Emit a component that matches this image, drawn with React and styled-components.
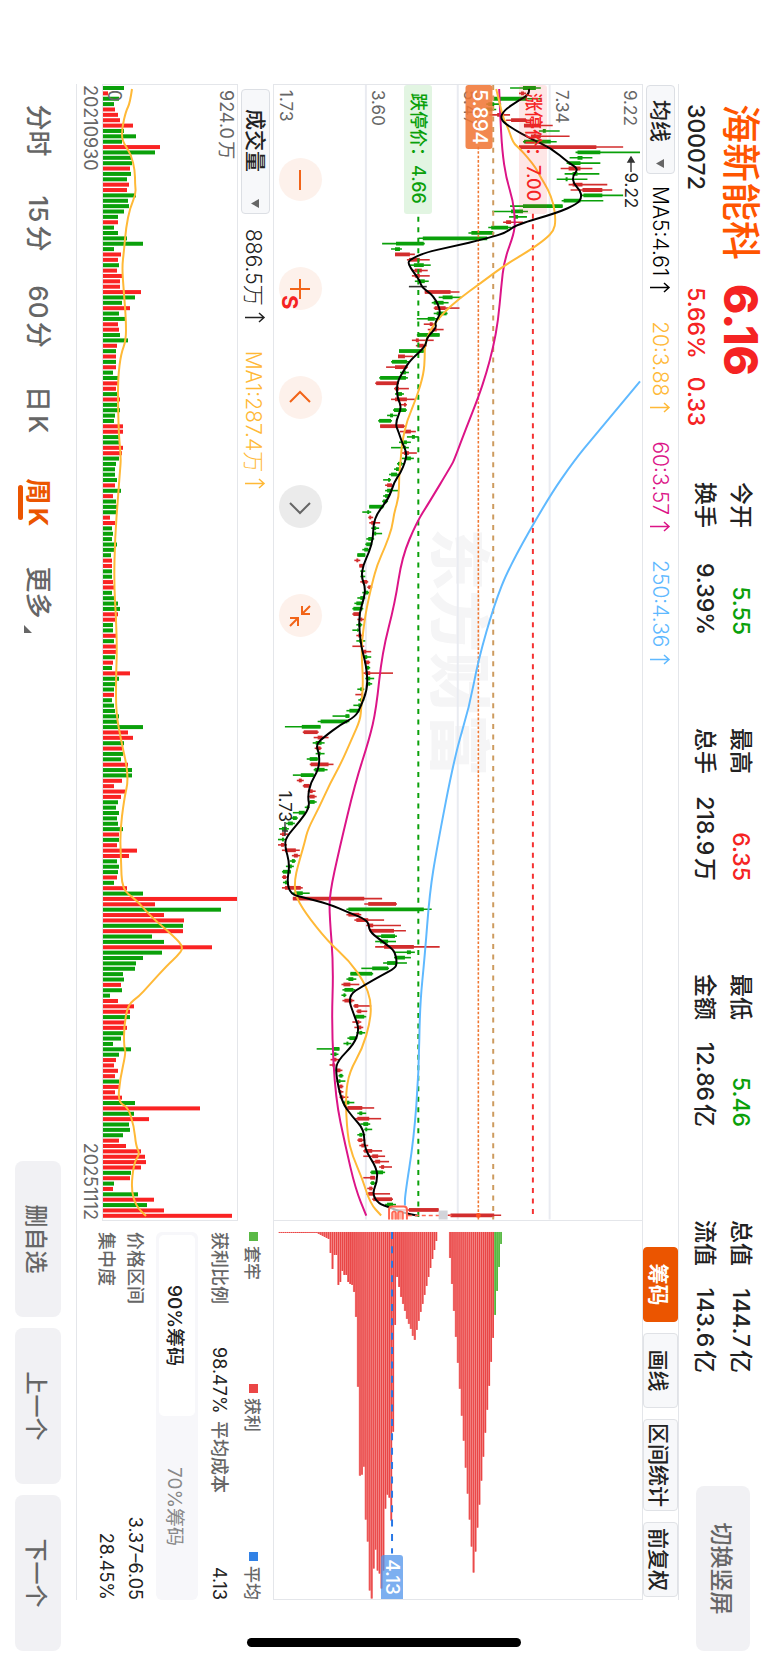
import { useState } from 'react';
import styled, { createGlobalStyle, css } from 'styled-components';

const RED = '#f52323';
const GREEN = '#0aa00a';
const ORANGE = '#eb5500';
const AMBER = '#ffb937';
const MAGENTA = '#dc1487';
const SKY = '#5fb9ff';
const BORDER = '#e4e6ea';

const CHART_W = 1137;
const CHART_H = 371;
const VOL_H = 134;
const STEP = 5.38;
const PRICE_MAX = 9.22;
const PRICE_MIN = 1.73;

// one week per entry: colour, low, body low, body high, high, volume
// (two letters: candle colour, then volume colour)
const weeks = `
g 238 251 264 269 21|r 247 249 252 254 5|g 221 221 255 269 16|g 214 216 222 229 11|gr 212 214 220 224 12
r 217 225 232 238 15|r 234 239 254 262 17|r 252 252 269 281 30|g 267 271 274 288 21|rg 259 259 269 298 33
g 251 252 279 285 19|r 247 247 325 352 57|g 304 306 329 369 52|g 298 306 311 321 29|g 295 297 309 329 29
r 289 297 309 321 27|g 293 301 306 328 28|g 285 294 296 316 24|r 297 301 311 336 26|r 299 311 331 341 24
g 309 312 331 352 33|g 290 292 309 332 25|g 238 251 291 291 26|g 220 239 251 256 21|g 237 242 246 255 15
r 231 234 239 251 15|g 216 219 236 239 11|g 196 199 221 222 15|g 146 150 215 215 24|g 109 123 151 152 40
g 118 122 127 129 11|r 122 122 137 142 18|r 134 136 147 157 15|g 136 141 151 158 16|r 139 142 149 155 14
r 139 142 147 157 20|gr 142 146 152 156 17|kr 136 150 150 154 17|r 152 152 178 187 38|g 166 170 180 189 32
g 159 161 171 176 19|r 161 162 173 187 27|g 161 164 174 175 16|g 144 155 162 167 22|r 151 157 160 162 15
r 155 159 164 171 16|g 144 146 167 167 17|rg 139 143 146 161 25|r 143 146 151 154 14|g 126 126 151 151 13
r 125 125 132 140 13|g 118 119 134 136 13|r 113 122 134 135 13|g 127 130 133 136 10|g 106 107 133 135 15
r 102 103 125 126 15|r 121 122 126 136 13|g 122 124 129 131 14|r 118 122 134 142 17|rg 126 131 133 134 14
g 120 121 133 134 17|g 114 117 120 124 12|g 105 106 118 119 11|r 107 107 131 132 20|r 127 132 138 143 20
g 134 139 142 146 16|g 126 128 134 138 16|gr 118 131 133 136 20|r 128 131 136 144 19|g 129 132 138 141 16
g 124 125 129 131 13|g 121 123 126 127 12|g 116 118 124 127 12|g 110 115 117 118 14|r 112 114 119 121 12
g 112 114 119 126 18|gr 110 112 116 117 10|g 109 110 114 115 13|g 96 96 110 111 14|g 89 94 96 98 13
r 95 96 98 100 7|r 96 98 102 107 12|g 98 100 103 106 9|g 99 101 103 109 10|g 93 95 99 101 9
g 92 93 98 99 14|g 89 91 95 96 12|g 84 84 92 92 8|r 81 83 85 87 9|r 86 86 90 90 9
g 87 89 90 92 9|g 87 89 90 92 9|r 87 89 94 95 10|r 94 95 98 99 12|g 89 91 95 96 9
g 84 87 90 92 11|g 81 83 89 90 15|g 79 80 89 90 17|r 79 80 86 86 15|r 84 87 89 92 14
g 83 85 88 89 10|g 79 84 85 86 10|r 83 85 88 90 14|g 83 86 89 92 11|r 79 88 89 91 13
r 89 90 93 98 14|g 90 91 94 98 12|r 91 92 96 97 10|g 92 93 96 97 9|r 90 92 97 120 27
g 92 94 97 101 16|g 93 95 97 99 14|g 84 87 90 91 11|r 82 88 89 90 11|g 85 87 89 91 9
g 80 85 88 89 11|g 73 76 86 87 12|g 59 72 76 76 16|g 44 47 74 76 15|g 11 28 47 47 40
r 29 30 44 45 25|r 40 44 49 55 30|g 39 42 48 51 21|r 41 43 47 48 19|g 42 45 47 51 20
g 33 36 44 45 18|r 36 37 55 60 25|g 40 41 51 54 29|g 19 27 40 41 29|r 23 25 28 30 19
r 29 30 36 37 11|r 34 36 39 42 22|r 34 36 41 43 18|g 35 36 41 43 15|g 31 33 35 36 13
g 19 25 31 32 16|g 17 19 23 24 14|g 12 14 19 21 15|g 5 8 13 15 20|r 6 8 11 14 16
g 4 8 10 12 16|r 4 7 10 13 14|r 8 11 22 26 34|r 18 20 24 27 26|g 16 18 21 22 14
g 12 14 18 20 16|g 8 9 17 17 15|r 8 9 12 13 14|g 9 11 14 15 11|r 8 11 27 29 24
g 18 21 29 36 40|r 19 19 91 109 134|r 91 95 123 124 52|g 73 75 151 159 118|r 73 75 86 88 61
r 81 83 95 111 81|rg 93 95 100 128 80|r 96 97 121 133 80|g 103 108 122 124 49|g 102 107 115 123 61
r 102 111 141 167 109|g 122 134 138 142 59|g 121 123 132 138 40|g 110 114 123 134 33|g 88 99 115 116 32
g 77 77 99 100 20|g 73 75 80 83 21|r 68 70 77 86 18|g 69 71 80 82 19|g 68 70 72 73 7
r 69 71 79 81 15|r 80 81 85 98 31|r 83 84 88 94 27|g 81 82 91 93 27|r 79 84 86 88 22
r 81 84 88 90 24|g 83 86 89 92 21|g 74 76 83 84 18|g 70 73 75 78 10|g 43 60 66 66 28
g 57 60 63 65 16|r 57 60 63 66 13|r 56 59 61 62 11|r 62 63 67 69 15|gr 65 66 69 70 12
g 63 65 67 72 16|r 65 66 69 70 16|r 65 66 68 70 12|r 66 67 70 75 19|g 69 71 76 81 32
r 73 74 89 101 97|g 84 86 89 93 31|r 82 84 96 108 46|g 87 90 95 97 26|g 91 92 94 99 27
g 84 86 89 92 20|r 84 85 89 92 16|r 86 88 91 95 23|r 90 91 99 109 38|r 90 99 105 112 42
r 99 102 107 116 43|r 106 108 111 119 38|g 97 98 110 112 28|r 90 97 102 102 27|g 97 98 101 102 11
r 94 96 99 100 10|rg 93 95 100 117 35|r 99 100 119 120 51|g 112 114 120 123 44|r 120 136 166 166 61
r 175 178 222 229 129`
  .trim()
  .split(/[\n|]/)
  .map((entry) => {
    const [tone, ...nums] = entry.split(' ');
    const [low, bodyLow, bodyHigh, high, volume] = nums.map(Number);
    return { tone: tone[0], volTone: tone[tone.length - 1], low, bodyLow, bodyHigh, high, volume };
  });

const averages = [
  {
    color: SKY,
    points: '297,2 353,49 376,68 413,94 483,134 521,149 576,165 623,174 673,189 766,207 809,214 873,219 923,224 989,225 1056,230 1113,239 1123,239',
  },
  {
    color: MAGENTA,
    points: '4,144 29,143 66,141 93,137 116,130 136,128 149,129 176,139 203,142 236,145 263,150 289,157 313,165 343,177 375,189 381,192 419,215 438,227 473,242 519,249 569,262 626,268 656,275 699,289 765,305 811,315 833,315 883,311 943,313 1016,309 1063,299 1106,289 1133,278',
  },
  {
    color: AMBER,
    points: '4,147 16,144 33,140 43,135 58,130 63,124 73,115 83,107 93,102 104,95 119,89 136,87 146,89 154,97 165,112 181,139 198,162 214,184 228,200 243,212 259,219 273,219 289,220 313,227 336,237 359,242 373,243 393,245 413,245 429,250 444,252 463,259 481,267 499,272 526,278 546,281 566,283 599,281 623,283 636,284 654,292 681,304 699,314 723,325 746,337 759,340 783,347 796,350 811,350 829,340 858,317 878,295 899,280 918,273 939,274 966,282 989,295 1013,299 1053,297 1073,292 1096,282 1121,274 1133,263',
  },
  {
    color: '#000',
    points: '4,114 9,113 16,125 26,140 35,143 44,130 54,112 63,92 78,74 84,64 91,70 99,69 106,62 113,61 119,65 128,85 140,127 148,137 154,157 162,192 168,219 175,234 179,236 188,230 196,224 203,222 211,210 228,202 238,209 243,207 253,217 262,218 276,234 286,240 298,247 313,247 323,242 339,249 349,245 358,242 369,237 378,239 388,243 398,250 414,255 429,267 441,271 454,271 468,275 481,281 493,283 503,279 514,280 529,285 546,285 563,283 574,280 589,277 606,277 624,284 633,289 641,304 653,320 661,329 671,325 686,326 699,334 713,337 724,335 738,345 754,359 763,360 781,355 799,358 811,354 814,342 821,315 829,297 837,276 848,275 856,265 864,254 869,249 880,247 885,249 892,262 902,280 913,297 933,290 946,285 961,290 978,307 989,309 1019,303 1034,292 1047,280 1066,280 1086,267 1099,267 1111,272 1121,266 1125,254 1130,242 1133,227',
  },
];

const volumeAverage =
  '4,105 18,107 26,111 43,115 56,115 69,106 86,102 99,102 109,101 123,107 143,111 166,113 183,115 209,113 236,111 256,111 269,116 293,119 323,119 353,118 374,116 386,117 413,119 453,122 499,123 533,121 566,120 593,121 629,121 656,116 693,108 716,113 749,117 776,116 806,115 816,101 833,86 853,63 864,53 873,60 881,69 903,89 913,98 921,109 943,113 963,113 969,111 996,117 1019,119 1024,109 1043,103 1063,101 1071,97 1079,103 1106,106 1123,101 1133,91';

// holdings per price level, lowest price first
const chips = [
  ...Array(19).fill(1), 1, 2, 3, 4, 5, 6, 7,
  21, 37, 23, 23, 53, 50, 39, 43, 43, 50, 52, 53, 60, 85, 155, 244, 243, 235, 288, 310, 359, 367,
  337, 318, 339, 342, 357, 339, 277, 263, 266, 289, 200, 93,
  45, 55, 65, 72, 79, 87, 92, 97, 104, 108, 98, 89, 80, 72, 63, 54, 45, 36, 27, 18, 9,
  0, 0, 0, 0, 0, 0,
  26, 52, 79, 105, 131, 157, 184, 209, 236, 262, 288, 315, 341, 320, 296, 273, 249, 225, 201, 178, 154, 130, 106,
  83, 59, 35, 12,
];
const CHIP_STEP = 1.975;
const TRAPPED_FROM = chips.length - 4;

const stats = [
  [{ label: '今开', value: '5.55', color: GREEN }, { label: '换手', value: '9.39%' }],
  [{ label: '最高', value: '6.35', color: RED }, { label: '总手', value: '218.9万' }],
  [{ label: '最低', value: '5.46', color: GREEN }, { label: '金额', value: '12.86亿' }],
  [{ label: '总值', value: '144.7亿' }, { label: '流值', value: '143.6亿' }],
];

const priceLabels = [9.22, 7.34, 5.47, 3.6, 1.73];
const periods = ['分时', '15分', '60分', '日K', '周K'];

const candleColors = { r: '#d22d2d', g: '#0aa00a', k: '#333' };
const volumeColors = { r: '#fa2323', g: '#0aa00a' };

const priceTop = (price) => `${((PRICE_MAX - price) / (PRICE_MAX - PRICE_MIN)) * 100}%`;

const smooth = (text) => {
  const pts = text.split(' ').map((p) => p.split(',').map(Number));
  let d = `M${pts[0]}`;
  for (let i = 1; i < pts.length - 1; i++) {
    const [x, y] = pts[i];
    const [nx, ny] = pts[i + 1];
    d += ` Q${x} ${y} ${(x + nx) / 2} ${(y + ny) / 2}`;
  }
  return `${d} L${pts[pts.length - 1]}`;
};

const GlobalStyle = createGlobalStyle`
  * { box-sizing: border-box; }
  body {
    margin: 0;
    background: #fff;
    color: #222;
    font-family: Inter, 'Noto Sans CJK SC', sans-serif;
  }
  button, select {
    font: inherit;
    color: inherit;
    margin: 0;
    padding: 0;
    border: 0;
    background: none;
    cursor: pointer;
  }
  dl, dd, dt, h1, p { margin: 0; }
`;

const Device = styled.div`
  height: 100vh;
  overflow: hidden;
`;

/* landscape screen turned clockwise */
const Screen = styled.main`
  position: relative;
  display: flex;
  flex-direction: column;
  width: 100vh;
  height: 100vw;
  transform-origin: 0 0;
  transform: translateX(100vw) rotate(90deg);
`;

const Header = styled.header`
  display: flex;
  height: 89px;
  padding: 0 11px 0 104px;
`;

const Quote = styled.div`
  width: 378px;
`;

const QuoteRow = styled.div`
  display: flex;
  align-items: center;
  height: ${(p) => (p.$small ? 36 : 54)}px;
  gap: 18px;
  font-size: ${(p) => (p.$small ? 23 : 24)}px;
  font-weight: 500;
`;

const StockName = styled.h1`
  width: 162px;
  color: #ff5500;
  font-size: 39px;
  font-weight: 500;
  line-height: 54px;
  white-space: nowrap;
`;

const Price = styled.strong`
  color: ${RED};
  font-size: 46px;
  font-weight: 800;
  line-height: 54px;
`;

const Code = styled.span`
  width: 165px;
`;

const Change = styled.span`
  color: ${RED};
`;

const Stats = styled.div`
  display: flex;
  flex: 1;
  gap: 93px;
  padding-top: 9px;
`;

const StatList = styled.dl`
  width: 153px;
`;

const Stat = styled.div`
  display: flex;
  justify-content: space-between;
  font-size: 23px;
  font-weight: 500;
  line-height: 36px;
  text-autospace: normal;

  dd {
    color: ${(p) => p.$color || '#222'};
  }
`;

const SoftButton = styled.button`
  width: ${(p) => p.$width}px;
  height: ${(p) => p.$height}px;
  border-radius: 8px;
  background: #f1f1f4;
  color: #666;
  font-size: 23px;
  font-weight: 500;
`;

const HeaderButton = styled(SoftButton)`
  margin-top: 18px;
`;

const Body = styled.div`
  display: flex;
  flex: 1;
  flex-direction: column;
  min-height: 0;
  margin: 0 62px 0 84px;
  border-top: 1px solid ${BORDER};
  border-bottom: 1px solid ${BORDER};
`;

const Toolbar = styled.div`
  display: flex;
  align-items: center;
  height: 35px;
  padding-left: ${(p) => p.$inset || 0}px;
  padding-right: 3px;
`;

const Picker = styled.label`
  display: flex;
  position: relative;
  align-items: center;
  width: ${(p) => p.$width}px;
  height: 29px;
  border: 1px solid #dcdfe4;
  border-radius: 4px;
  background: #f7f8fa;

  select {
    width: 100%;
    height: 100%;
    padding-left: ${(p) => p.$pad}px;
    appearance: none;
    font-size: 21px;
    font-weight: 500;
  }

  svg {
    position: absolute;
    right: 5px;
    pointer-events: none;
  }
`;

const ReadingText = styled.span`
  display: flex;
  align-items: center;
  gap: 6px;
  margin-left: ${(p) => p.$gap}px;
  color: ${(p) => p.$color || '#222'};
  font-size: 21px;
  font-weight: 300;
`;

const Tools = styled.div`
  display: flex;
  gap: 11px;
  margin-left: auto;
`;

const Tool = styled.button`
  min-width: 75px;
  height: 35px;
  padding: 0 3px;
  border: 1px solid #e0e2e6;
  border-radius: 4px;
  background: #f7f8fa;
  font-size: 21px;
  font-weight: 500;
  ${(p) =>
    p.$active &&
    css`
      border-color: ${ORANGE};
      background: ${ORANGE};
      color: #fff;
      font-weight: 700;
    `}
`;

const ChartFrame = styled.section`
  display: grid;
  flex: 1;
  grid-template-columns: 3fr 1fr;
  min-height: 0;
  border: 1px solid ${BORDER};
`;

const Pane = styled.div`
  position: relative;
  min-width: 0;
  min-height: 0;
  border-right: ${(p) => (p.$divided ? `1px solid ${BORDER}` : 0)};
`;

const Drawing = styled.svg`
  display: block;
  position: absolute;
  inset: 0;
  width: 100%;
  height: 100%;
`;

const Watermark = styled.span`
  position: absolute;
  top: 50%;
  left: 50%;
  transform: translate(-50%, -50%);
  color: #f5f5f6;
  font-size: 62px;
  font-weight: 900;
  line-height: 1;
  white-space: nowrap;
`;

const AxisLabel = styled.span`
  position: absolute;
  left: 5px;
  padding: 2px 0;
  transform: ${(p) => (p.$below ? 'none' : 'translateY(-100%)')};
  color: #666;
  font-size: 17px;
  line-height: 20px;
`;

const LimitTag = styled.span`
  position: absolute;
  left: 0;
  min-width: 129px;
  height: 28px;
  padding: 0 8px;
  transform: translateY(-50%);
  border-radius: 3px;
  background: ${(p) => (p.$up ? 'rgba(250, 50, 50, 0.12)' : 'rgba(20, 170, 20, 0.12)')};
  color: ${(p) => (p.$up ? RED : GREEN)};
  font-size: 18px;
  font-weight: 500;
  line-height: 28px;
  white-space: nowrap;
`;

const CostTag = styled.span`
  position: absolute;
  left: 0;
  height: 27px;
  padding: 0 4px;
  transform: translateY(-50%);
  border-radius: 3px;
  background: rgba(240, 120, 55, 0.88);
  color: #fff;
  font-size: 20px;
  font-weight: 500;
  line-height: 27px;
`;

const Marker = styled.span`
  display: flex;
  position: absolute;
  top: ${(p) => p.$top}%;
  left: ${(p) => p.$left}%;
  align-items: center;
  transform: translateY(-50%);
  color: #222;
  font-size: 17px;
  line-height: 20px;
`;

const Controls = styled.div`
  display: flex;
  position: absolute;
  bottom: 5px;
  left: 73px;
  gap: 66px;
`;

const RoundButton = styled.button`
  display: flex;
  align-items: center;
  justify-content: center;
  width: 43px;
  height: 43px;
  border-radius: 50%;
  background: ${(p) => (p.$muted ? '#ebebeb' : '#fdf1eb')};
  color: ${(p) => (p.$muted ? '#666' : '#f26418')};
`;

const SellMark = styled.b`
  position: absolute;
  bottom: 4px;
  left: 210px;
  color: ${RED};
  font-size: 22px;
  line-height: 24px;
`;

const CostLabel = styled.span`
  position: absolute;
  top: 68%;
  right: 0;
  padding: 0 4px;
  transform: translateY(-50%);
  border-radius: 3px 0 0 3px;
  background: rgba(80, 148, 235, 0.75);
  color: #fff;
  font-size: 19px;
  font-weight: 500;
  line-height: 22px;
`;

const Lower = styled.section`
  display: grid;
  grid-template-columns: 3fr 1fr;
`;

const VolumePane = styled.div`
  position: relative;
  height: 136px;
  border: 1px solid ${BORDER};
`;

const VolumeLabel = styled.span`
  position: absolute;
  left: 5px;
  ${(p) => (p.$bottom ? 'bottom: 0;' : 'top: 0;')}
  color: #666;
  font-size: 18px;
  line-height: 22px;
  text-autospace: normal;
`;

const Dates = styled.div`
  display: flex;
  justify-content: space-between;
  height: 25px;
  padding: 0 1px;
  color: #666;
  font-size: 18px;
  line-height: 24px;
`;

const ChipPanel = styled.aside`
  padding-left: 11px;
  color: #666;
  font-size: 18px;
  font-weight: 500;
`;

const Legend = styled.div`
  display: grid;
  grid-template-columns: 152px 1fr auto;
  height: 38px;
  align-items: center;
`;

const LegendItem = styled.span`
  display: flex;
  align-items: center;
  gap: 5px;
  font-size: 17px;

  &::before {
    content: '';
    width: 9px;
    height: 9px;
    background: ${(p) => p.$color};
  }
`;

const InfoRow = styled.div`
  display: flex;
  justify-content: space-between;
  line-height: 29px;

  b {
    color: #222;
    font-weight: 400;
  }
`;

const CostRow = styled(InfoRow)`
  display: grid;
  grid-template-columns: 115px 74px 1fr auto;
  height: 37px;
  line-height: 32px;
`;

const Toggle = styled.div`
  display: flex;
  height: 42px;
  margin-bottom: 6px;
  padding: 3px;
  border-radius: 6px;
  background: #f7f7fa;
`;

const ToggleButton = styled.button`
  flex: 1;
  border-radius: 5px;
  background: ${(p) => (p.$active ? '#fff' : 'transparent')};
  color: ${(p) => (p.$active ? '#222' : '#888')};
  font-size: 19px;
  font-weight: ${(p) => (p.$active ? 500 : 400)};
`;

const Footer = styled.footer`
  display: flex;
  align-items: center;
  justify-content: space-between;
  height: 76px;
  padding: 0 11px 0 84px;
`;

const Periods = styled.nav`
  display: flex;
`;

const Period = styled.button`
  position: relative;
  width: 93px;
  color: ${(p) => (p.$active ? ORANGE : '#666')};
  font-size: 26px;
  font-weight: ${(p) => (p.$active ? 700 : 500)};
  line-height: 40px;
  text-autospace: normal;

  &::after {
    content: '';
    display: ${(p) => (p.$active ? 'block' : 'none')};
    position: absolute;
    right: 29px;
    bottom: 0;
    left: 29px;
    height: 5px;
    border-radius: 3px;
    background: ${ORANGE};
  }
`;

const More = styled(Period)`
  display: flex;
  align-items: flex-end;
  justify-content: center;
  gap: 6px;
  padding-left: 8px;

  svg {
    flex: none;
    margin-bottom: 6px;
  }
`;

const Pager = styled.div`
  display: flex;
  gap: 11px;
`;

const HomeBar = styled.span`
  position: absolute;
  top: 247px;
  right: 15px;
  bottom: 247px;
  width: 9px;
  border-radius: 5px;
  background: #000;
`;

const Caret = () => (
  <svg width="9" height="8" viewBox="0 0 9 8" aria-hidden="true">
    <path d="M0 0h9L4.5 8z" fill="#666" />
  </svg>
);

const Icon = ({ d }) => (
  <svg width="24" height="24" viewBox="0 0 24 24" fill="none" stroke="currentColor" strokeWidth="2" aria-hidden="true">
    <path d={d} />
  </svg>
);

const Reading = ({ children, gap, color }) => (
  <ReadingText $gap={gap} $color={color}>
    {children}
    <svg width="11" height="22" viewBox="0 0 11 22" fill="none" stroke="currentColor" strokeWidth="1.5" role="img" aria-label="上升">
      <path d="M5.5 21V2M1 7l4.500-5L10 7" />
    </svg>
  </ReadingText>
);

const PriceChart = () => (
  <Drawing viewBox={`0 0 ${CHART_W} ${CHART_H}`} preserveAspectRatio="none" role="img" aria-label="周K线">
    <g stroke="#e9ebf1" strokeWidth="2">
      {priceLabels.slice(1, 4).map((price) => {
        const y = ((PRICE_MAX - price) / (PRICE_MAX - PRICE_MIN)) * CHART_H;
        return <line key={price} x1="0" x2={CHART_W} y1={y} y2={y} />;
      })}
    </g>
    {weeks.map((w, i) => {
      const x = 3 + i * STEP;
      return (
        <g key={i} stroke={candleColors[w.tone]}>
          <line x1={x} x2={x} y1={CHART_H - w.low} y2={CHART_H - w.high} strokeWidth="1.6" />
          <line x1={x} x2={x} y1={CHART_H - w.bodyLow} y2={CHART_H - w.bodyHigh} strokeWidth="3.8" />
        </g>
      );
    })}
    <g fill="none" strokeWidth="2">
      <path d="M129 110H1137" stroke="#f53232" strokeDasharray="5 5.5" />
      <path d="M132 225.500H1137" stroke={GREEN} strokeDasharray="5 5.5" />
      <path d="M0 150H1137" stroke="#cd9b5f" strokeDasharray="5 5.5" />
      <path d="M62 165H1137" stroke="#f07832" strokeWidth="1.6" strokeDasharray="2.6 1.8" />
    </g>
    {averages.map((line) => (
      <path key={line.color} d={smooth(line.points)} fill="none" stroke={line.color} strokeWidth="2" />
    ))}
    <path d="M1133 236V192" stroke="#ff6450" strokeWidth="1.5" strokeDasharray="4 3" />
    <path d="M1137 237h-10q-3 0-3 3v12q0 3 3 3h10" fill="#fff" fillOpacity=".7" stroke="#ff6450" strokeWidth="2" />
    <path d="M1137 241h-6q-2 0-2 2v1q0 2 2 2h6M1137 248h-6q-2 0-2 2v0q0 2 2 2h6" fill="#ffb4a5" stroke="#ff6450" strokeWidth="1.6" />
    <rect x="1128" y="196" width="9" height="9" fill="#d2d4da" />
    <circle cx="1133" cy="165" r="2.4" fill="#ff501e" />
  </Drawing>
);

const ChipChart = () => (
  <Drawing viewBox={`0 0 379 ${CHART_H}`} preserveAspectRatio="none" role="img" aria-label="筹码分布">
    {chips.map((size, i) => {
      const y = 364.5 - i * CHIP_STEP;
      const trapped = i >= TRAPPED_FROM;
      return (
        <g key={i}>
          <rect x="11" y={y} width={size} height={CHIP_STEP} fill={trapped ? '#82cd6e' : '#f27878'} />
          <rect x="11" y={y} width={size} height="1.3" fill={trapped ? '#50b43c' : '#e94646'} />
        </g>
      );
    })}
    <path d="M11 252H333" stroke="#2878e6" strokeWidth="2" strokeDasharray="7 7.4" />
  </Drawing>
);

const VolumeChart = () => (
  <Drawing viewBox={`0 0 ${CHART_W} ${VOL_H}`} preserveAspectRatio="none" role="img" aria-label="成交量">
    {weeks.map((w, i) => (
      <rect
        key={i}
        x={1 + i * STEP}
        y={VOL_H - w.volume}
        width="4"
        height={w.volume}
        fill={volumeColors[w.volTone]}
      />
    ))}
    <path d={smooth(volumeAverage)} fill="none" stroke={AMBER} strokeWidth="2" />
  </Drawing>
);

const App = () => {
  const [period, setPeriod] = useState('周K');
  const [share, setShare] = useState('90%');

  return (
    <Device>
      <GlobalStyle />
      <Screen>
        <Header>
          <Quote>
            <QuoteRow>
              <StockName>海新能科</StockName>
              <Price>6.16</Price>
            </QuoteRow>
            <QuoteRow $small>
              <Code>300072</Code>
              <Change>5.66%</Change>
              <Change>0.33</Change>
            </QuoteRow>
          </Quote>
          <Stats>
            {stats.map((column) => (
              <StatList key={column[0].label}>
                {column.map((s) => (
                  <Stat key={s.label} $color={s.color}>
                    <dt>{s.label}</dt>
                    <dd>{s.value}</dd>
                  </Stat>
                ))}
              </StatList>
            ))}
          </Stats>
          <HeaderButton $width={165} $height={54}>切换竖屏</HeaderButton>
        </Header>

        <Body>
          <Toolbar $inset={1}>
            <Picker $width={89} $pad={14}>
              <select aria-label="主图指标" defaultValue="均线">
                <option>均线</option>
              </select>
              <Caret />
            </Picker>
            <Reading gap={12} color="#000">MA5:4.61</Reading>
            <Reading gap={28} color={AMBER}>20:3.88</Reading>
            <Reading gap={28} color={MAGENTA}>60:3.57</Reading>
            <Reading gap={28} color={SKY}>250:4.36</Reading>
            <Tools>
              <Tool $active>筹码</Tool>
              <Tool>画线</Tool>
              <Tool>区间统计</Tool>
              <Tool>前复权</Tool>
            </Tools>
          </Toolbar>

          <ChartFrame>
            <Pane $divided>
              <Watermark>东方财富</Watermark>
              {priceLabels.map((price, i) => (
                <AxisLabel key={price} $below={i === 0} style={{ top: priceTop(price) }}>
                  {price.toFixed(2)}
                </AxisLabel>
              ))}
              <PriceChart />
              <LimitTag $up style={{ top: priceTop(7) }}>涨停价：7.00</LimitTag>
              <LimitTag style={{ top: priceTop(4.66) }}>跌停价：4.66</LimitTag>
              <CostTag style={{ top: priceTop(5.894) }}>5.894</CostTag>
              <Marker $top={3} $left={6.3}>
                <svg width="16" height="10" viewBox="0 0 16 10" aria-hidden="true">
                  <path d="M6 2v6L1 5z M5 5h11" fill="#333" stroke="#333" strokeWidth="1.4" />
                </svg>
                9.22
              </Marker>
              <Marker $top={97} $left={62.2}>
                1.73
                <svg width="14" height="10" viewBox="0 0 14 10" aria-hidden="true">
                  <path d="M0 5h14M9 2v6" stroke="#333" strokeWidth="1.4" />
                </svg>
              </Marker>
              <Controls>
                <RoundButton aria-label="缩小"><Icon d="M2 12h20" /></RoundButton>
                <RoundButton aria-label="放大"><Icon d="M2 12h20M12 2v20" /></RoundButton>
                <RoundButton aria-label="左移"><Icon d="M16 2L6 12l10 10" /></RoundButton>
                <RoundButton $muted aria-label="右移"><Icon d="M8 2l10 10L8 22" /></RoundButton>
                <RoundButton aria-label="收起">
                  <Icon d="M2 2l8 8M10 2v8H2M22 22l-8-8M14 22v-8h8" />
                </RoundButton>
              </Controls>
              <SellMark>S</SellMark>
            </Pane>
            <Pane>
              <ChipChart />
              <CostLabel>4.13</CostLabel>
            </Pane>
          </ChartFrame>

          <Lower>
            <div>
              <Toolbar $inset={5}>
                <Picker $width={125} $pad={19}>
                  <select aria-label="副图指标" defaultValue="成交量">
                    <option>成交量</option>
                  </select>
                  <Caret />
                </Picker>
                <Reading gap={15}>886.5万</Reading>
                <Reading gap={28} color={AMBER}>MA1:287.4万</Reading>
              </Toolbar>
              <VolumePane>
                <VolumeLabel>924.0万</VolumeLabel>
                <VolumeChart />
                <VolumeLabel $bottom>0</VolumeLabel>
              </VolumePane>
              <Dates>
                <span>20210930</span>
                <span>20251112</span>
              </Dates>
            </div>
            <ChipPanel>
              <Legend>
                <LegendItem $color="#5ab946">套牢</LegendItem>
                <LegendItem $color="#eb4646">获利</LegendItem>
                <LegendItem $color="#3282e6">平均</LegendItem>
              </Legend>
              <CostRow>
                <span>获利比例</span>
                <b>98.47%</b>
                <span>平均成本</span>
                <b>4.13</b>
              </CostRow>
              <Toggle>
                {['90%', '70%'].map((s) => (
                  <ToggleButton key={s} $active={s === share} onClick={() => setShare(s)}>
                    {s}筹码
                  </ToggleButton>
                ))}
              </Toggle>
              <InfoRow>
                <span>价格区间</span>
                <b>3.37–6.05</b>
              </InfoRow>
              <InfoRow>
                <span>集中度</span>
                <b>28.45%</b>
              </InfoRow>
            </ChipPanel>
          </Lower>
        </Body>

        <Footer>
          <Periods>
            {periods.map((p) => (
              <Period key={p} $active={p === period} onClick={() => setPeriod(p)}>
                {p}
              </Period>
            ))}
            <More>
              更多
              <svg width="8" height="8" viewBox="0 0 8 8" aria-hidden="true">
                <path d="M8 0v8H0z" fill="#666" />
              </svg>
            </More>
          </Periods>
          <Pager>
            <SoftButton $width={156} $height={46}>删自选</SoftButton>
            <SoftButton $width={156} $height={46}>上一个</SoftButton>
            <SoftButton $width={156} $height={46}>下一个</SoftButton>
          </Pager>
        </Footer>
        <HomeBar />
      </Screen>
    </Device>
  );
};

export default App;
